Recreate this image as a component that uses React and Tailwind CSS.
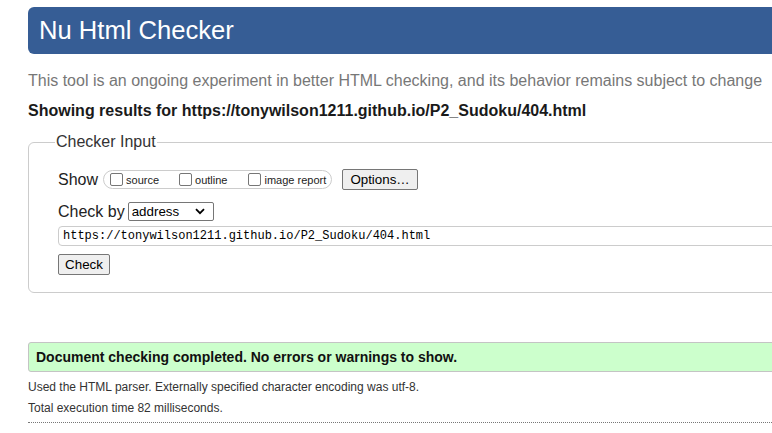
import React from 'react';

const sans = { fontFamily: '"Liberation Sans", Arial, sans-serif' };

function Box({ label, className = '' }) {
    return (
        <label className={`flex items-center ${className}`}>
            <span className="w-[13px] h-[13px] border border-[#767676] rounded-[2px] bg-white shrink-0"></span>
            <span className="ml-[3px] mt-[2px] text-[11px] leading-none text-[#222]">{label}</span>
        </label>
    );
}

export default function App() {
    return (
        <div className="w-[772px] h-[433px] overflow-hidden bg-white text-[#222]" style={sans}>
            <div className="w-[1100px] pl-[28px]">
                <header className="mt-[7px] h-[47px] rounded-l-[6px] bg-[#365d95] flex items-center pl-[11px]">
                    <h1 className="text-[25.6px] leading-none text-white">Nu Html Checker</h1>
                </header>

                <p className="mt-[18px] h-[18px] leading-[18px] text-[16px] text-[#777]">
                    This tool is an ongoing experiment in better HTML checking, and its behavior remains subject to change
                </p>
                <p className="mt-[12px] h-[18px] leading-[18px] text-[16px] font-bold text-[#1a1a1a]">
                    Showing results for https://tonywilson1211.github.io/P2_Sudoku/404.html
                </p>

                <fieldset className="mt-[13px] border border-[#ccc] rounded-l-[6px] px-[29px] pb-[17px]">
                    <legend className="-ml-[3px] px-[1px] text-[16px] leading-[18px] text-[#333]">Checker Input</legend>

                    <div className="mt-[18px] flex items-center h-[21px]">
                        <span className="text-[16px] leading-none text-[#222]">Show</span>
                        <div className="ml-[5px] h-[19px] w-[229px] rounded-full border border-[#ccc] flex items-center pl-[6px]">
                            <Box label="source" />
                            <Box label="outline" className="ml-[20px]" />
                            <Box label="image report" className="ml-[21px]" />
                        </div>
                        <button className="ml-[10px] h-[21px] w-[76px] bg-[#efefef] border border-[#767676] rounded-[2px] text-[13.33px] leading-none text-black">
                            Options…
                        </button>
                    </div>

                    <div className="mt-[12px] flex items-center h-[19px]">
                        <span className="text-[16px] leading-none text-[#222]">Check by</span>
                        <div className="ml-[3px] h-[19px] w-[86px] border border-[#767676] rounded-[2px] bg-white flex items-center justify-between pl-[3px] pr-[8px]">
                            <span className="text-[13.33px] leading-none text-black">address</span>
                            <svg width="10" height="7" viewBox="0 0 10 7" fill="none">
                                <path d="M1 1.2l4 4 4-4" stroke="#000" strokeWidth="1.8" />
                            </svg>
                        </div>
                    </div>

                    <div className="mt-[5px] h-[20px] border border-[#ccc] rounded-l-[4px] flex items-center pl-[4px]">
                        <span className="text-[12px] leading-none text-black" style={{ fontFamily: '"Liberation Mono", "DejaVu Sans Mono", monospace' }}>
                            https://tonywilson1211.github.io/P2_Sudoku/404.html
                        </span>
                    </div>

                    <button className="mt-[8px] block h-[21px] w-[52px] bg-[#efefef] border border-[#767676] rounded-[2px] text-[13.33px] leading-none text-black">
                        Check
                    </button>
                </fieldset>

                <div className="mt-[49px] h-[30px] border border-[#c4c4c4] rounded-l-[3px] bg-[#ccffcc] flex items-center pl-[7px]">
                    <p className="text-[14px] font-bold leading-none text-[#111]">Document checking completed. No errors or warnings to show.</p>
                </div>

                <p className="mt-[8px] h-[14px] leading-[14px] text-[12px] text-[#333]">Used the HTML parser. Externally specified character encoding was utf-8.</p>
                <p className="mt-[7px] h-[14px] leading-[14px] text-[12px] text-[#333]">Total execution time 82 milliseconds.</p>
                <div className="mt-[7px] border-t border-dotted border-[#777]"></div>
            </div>
        </div>
    );
}
